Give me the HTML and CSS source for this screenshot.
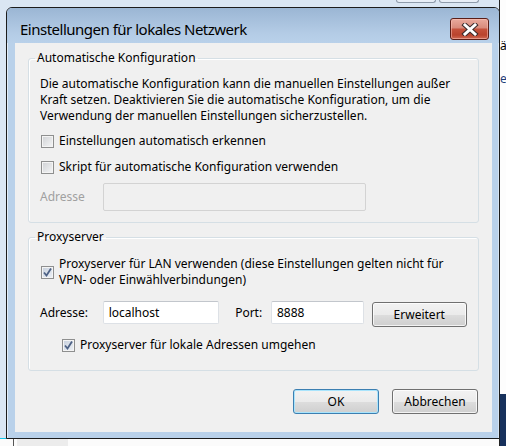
FILE: index.html
```html
<!DOCTYPE html>
<html lang="de">
<head>
<meta charset="utf-8">
<title>Einstellungen für lokales Netzwerk</title>
<link rel="stylesheet" href="styles.css">
</head>
<body>
<div class="desktop">
  <div class="bg-win-top">
    <span class="bg-cap-btn"></span><span class="bg-cap-btn"></span>
  </div>
  <div class="bg-right"><span class="frag f1">ä</span><span class="frag f2">e</span><div class="bg-navy"></div></div>
  <div class="bg-bottom"><span class="bg-line"></span><span class="bg-grey"></span></div>

  <div class="dialog">
    <div class="titlebar">
      <span class="title">Einstellungen für lokales Netzwerk</span>
      <button class="close" aria-label="Schließen">
        <svg width="18" height="13" viewBox="0 0 18 13">
          <path d="M4 2 L14 11 M14 2 L4 11" stroke="#3a2a2a" stroke-width="5" stroke-linecap="square" fill="none"/>
          <path d="M4 2 L14 11 M14 2 L4 11" stroke="#ffffff" stroke-width="3" stroke-linecap="square" fill="none"/>
        </svg>
      </button>
    </div>
    <div class="client">
      <fieldset class="group group-auto">
        <legend>Automatische Konfiguration</legend>
        <p class="desc">Die automatische Konfiguration kann die manuellen Einstellungen außer<br>Kraft setzen. Deaktivieren Sie die automatische Konfiguration, um die<br>Verwendung der manuellen Einstellungen sicherzustellen.</p>
        <label class="check row-1"><span class="box"></span><span>Einstellungen automatisch erkennen</span></label>
        <label class="check row-2"><span class="box"></span><span>Skript für automatische Konfiguration verwenden</span></label>
        <div class="addr-row">
          <span class="lbl disabled">Adresse</span>
          <span class="input input-disabled"></span>
        </div>
      </fieldset>
      <fieldset class="group group-proxy">
        <legend>Proxyserver</legend>
        <label class="check multi"><span class="box checked"><svg width="11" height="11" viewBox="0 0 11 11"><path d="M2 5.5 L4.5 8.5 L9 1.5" stroke="#4d6185" stroke-width="1.8" fill="none"/></svg></span><span>Proxyserver für LAN verwenden (diese Einstellungen gelten nicht für<br>VPN- oder Einwählverbindungen)</span></label>
        <div class="proxy-row">
          <span class="lbl">Adresse:</span>
          <span class="input input-addr">localhost</span>
          <span class="lbl lbl-port">Port:</span>
          <span class="input input-port">8888</span>
          <button class="btn btn-adv">Erweitert</button>
        </div>
        <label class="check bypass"><span class="box checked"><svg width="11" height="11" viewBox="0 0 11 11"><path d="M2 5.5 L4.5 8.5 L9 1.5" stroke="#4d6185" stroke-width="1.8" fill="none"/></svg></span><span>Proxyserver für lokale Adressen umgehen</span></label>
      </fieldset>
      <div class="buttons">
        <button class="btn btn-default">OK</button>
        <button class="btn">Abbrechen</button>
      </div>
    </div>
  </div>
</div>
</body>
</html>
```
FILE: styles.css
```css
* { box-sizing: border-box; }
html, body { margin: 0; padding: 0; }
body {
  width: 506px;
  height: 446px;
  overflow: hidden;
  background: #dae6f3;
  font-family: "Noto Sans", "Open Sans", sans-serif;
  font-size: 12px;
  color: #000;
}
.desktop { position: relative; width: 506px; height: 446px; }

/* background fragments */
.bg-win-top { position: absolute; left: 396px; top: 0; width: 110px; height: 8px; display: flex; gap: 3px; }
.bg-cap-btn { width: 40px; height: 3px; border: 1px solid #8e9bab; border-top: none; border-radius: 0 0 3px 3px; background: #e7eef7; }
.bg-right { position: absolute; left: 499px; top: 0; width: 7px; height: 446px; background: #fdfdfd; border-left: 1px solid #222; overflow: hidden; }
.frag { position: absolute; left: 0; font-size: 12px; }
.f1 { top: 37px; }
.f2 { top: 70px; color: #1d3f7a; }
.bg-navy { position: absolute; left: 0; top: 394px; width: 7px; height: 52px; background: #17315c; }
.bg-bottom { position: absolute; left: 0; top: 438px; width: 499px; height: 8px; background: #fbfbfb; border-top: 1px solid #14c4e8; }
.bg-line { position: absolute; left: 13px; top: 0; width: 1px; height: 8px; background: #555; }
.bg-grey { position: absolute; left: 17px; top: 0; width: 51px; height: 8px; background: #ececec; }

/* dialog */
.dialog {
  position: absolute;
  left: 6px;
  top: 7px;
  width: 494px;
  height: 432px;
  border: 1px solid #1c1c1c;
  border-radius: 6px 6px 0 0;
  background: #b9d1ea;
  display: flex;
  flex-direction: column;
  padding: 0 7px 6px 8px;
  box-shadow: inset 1px 1px 0 rgba(255,255,255,0.6), inset -1px 0 0 rgba(255,255,255,0.4);
}
.titlebar {
  height: 35px;
  margin: 0 -7px 0 -8px;
  padding: 0 10px 0 13px;
  display: flex;
  align-items: flex-start;
  justify-content: space-between;
  background: linear-gradient(#9bb6d4, #b3cbe5 70%, #b9d1ea);
  border-radius: 5px 5px 0 0;
}
.title { font-size: 15px; letter-spacing: -0.5px; line-height: 20px; margin-top: 11px; color: #000; }
.close {
  width: 39px;
  height: 22px;
  margin-top: 10px;
  padding: 0;
  border: 1px solid #5a1f18;
  border-radius: 3px;
  background: linear-gradient(#e9aa9d 0%, #d88a7b 45%, #c5523c 50%, #b9432d 80%, #cf6b55 100%);
  box-shadow: inset 0 0 0 1px rgba(255,200,190,0.5);
  display: flex;
  align-items: center;
  justify-content: center;
}
.close svg { display: block; }
.client {
  flex: 1;
  background: #f0f0f0;
  padding: 7px 13px 0 13px;
  display: flex;
  flex-direction: column;
}

/* group boxes */
.group {
  margin: 0;
  padding: 0 11px 0 11px;
  border: 1px solid #d5dfe5;
  border-radius: 3px;
  box-shadow: inset 1px 1px 0 #fff;
  min-width: 0;
}
.group legend {
  padding: 0 2px;
  margin-left: -5px;
  line-height: 16px;
  font-size: 12px;
}
.group-auto { padding-top: 10px; padding-bottom: 11px; }
.group-proxy { margin-top: 6px; padding-top: 11px; padding-bottom: 17px; }

.desc { margin: 0; line-height: 16px; }

.check { display: flex; align-items: center; gap: 5px; line-height: 16px; padding-left: 1px; }
.row-1 { margin-top: 9px; }
.row-2 { margin-top: 10px; }
.box {
  flex: none;
  width: 13px;
  height: 13px;
  border: 1px solid #8e8f8f;
  background: linear-gradient(135deg, #cfd1d4, #f5f6f7);
  box-shadow: inset 0 0 0 1px #f4f4f4;
  display: flex;
  align-items: center;
  justify-content: center;
}
.box.checked { background: linear-gradient(135deg, #c6cfdc, #eef2f7); }
.box svg { display: block; }

.addr-row { display: flex; align-items: center; margin-top: 8px; }
.lbl { line-height: 16px; }
.disabled { color: #a0a0a0; }
.addr-row .lbl { width: 63px; }

.input {
  display: flex;
  align-items: center;
  height: 23px;
  padding: 0 5px;
  background: #fff;
  border: 1px solid #dde1e6;
  border-top-color: #c2c6cc;
  border-radius: 2px;
}
.input-disabled { width: 263px; height: 28px; background: #f0f0f0; border-color: #d3d3d3; }

.multi { margin-top: 0; }

.proxy-row { display: flex; align-items: flex-start; margin-top: 13px; }
.proxy-row .lbl { line-height: 23px; }
.proxy-row > .lbl:first-child { width: 63px; }
.input-addr { width: 117px; }
.lbl-port { margin-left: 16px; width: 36px; }
.input-port { width: 93px; }
.btn-adv { margin-left: 8px; margin-top: 1px; width: 96px; }

.bypass { margin-top: 10px; padding-left: 22px; }

.btn {
  height: 25px;
  padding: 0;
  font-family: inherit;
  font-size: 12px;
  color: #000;
  border: 1px solid #707070;
  border-radius: 3px;
  background: linear-gradient(#f2f2f2 0%, #ebebeb 50%, #dddddd 51%, #cfcfcf 100%);
  box-shadow: inset 0 0 0 1px rgba(255,255,255,0.75);
}
.btn-default {
  border-color: #3c7fb1;
  box-shadow: inset 0 0 0 1px #a9e4fc;
}
.buttons { display: flex; justify-content: flex-end; gap: 13px; margin-top: 18px; padding-right: 1px; }
.buttons .btn { width: 86px; }
```
